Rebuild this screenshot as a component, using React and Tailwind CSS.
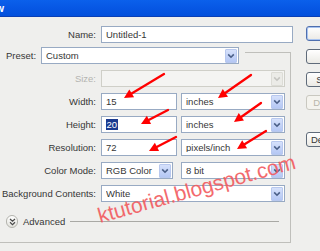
import React from "react";

function DropBtn({ disabled }) {
  return (
    <div
      className={
        disabled
          ? "mr-[1px] flex h-[14px] w-[12px] items-center justify-center rounded-[1px] border border-[#dcdcd6] bg-[#ebebe7]"
          : "mr-[1px] flex h-[14px] w-[12px] items-center justify-center rounded-[1px] border border-[#b8c8ee] bg-gradient-to-b from-[#d6e1fb] to-[#b4c7f4]"
      }
    >
      <svg width="8" height="6" viewBox="0 0 8 6">
        <path
          d="M1.2 1.4 L4 4.2 L6.8 1.4"
          fill="none"
          stroke={disabled ? "#c4c4c0" : "#4a5f87"}
          strokeWidth="1.6"
        />
      </svg>
    </div>
  );
}

function Combo({ cls, text, disabled }) {
  return (
    <div
      className={
        (disabled
          ? "border-[#cfcfc8] bg-[#f4f4f2] "
          : "border-[#98aac3] bg-white ") +
        "flex h-[17px] items-center border pl-[4px] " +
        cls
      }
    >
      <span className="flex-1 truncate leading-none">{text}</span>
      <DropBtn disabled={disabled} />
    </div>
  );
}

function Field({ cls, children }) {
  return (
    <div
      className={
        "flex h-[17px] items-center border border-[#98aac3] bg-white pl-[4px] " +
        cls
      }
    >
      {children}
    </div>
  );
}

function Row({ label, labelCls, children }) {
  return (
    <div className="flex h-[17px] items-center">
      <div
        className={
          "w-[96px] whitespace-nowrap pr-[0px] text-right leading-none " +
          (labelCls || "")
        }
      >
        {label}
      </div>
      <div className="ml-[5px] flex items-center">{children}</div>
    </div>
  );
}

function Arrow({ x1, y1, x2, y2 }) {
  const dx = x2 - x1;
  const dy = y2 - y1;
  const L = Math.hypot(dx, dy);
  const ux = dx / L;
  const uy = dy / L;
  const hl = 9;
  const hw = 4.6;
  const bx = x2 - ux * hl;
  const by = y2 - uy * hl;
  const px = -uy;
  const py = ux;
  return (
    <g>
      <line
        x1={x1}
        y1={y1}
        x2={bx + ux * 2}
        y2={by + uy * 2}
        stroke="#ff0000"
        strokeWidth="2.3"
        strokeLinecap="round"
      />
      <polygon
        points={`${x2},${y2} ${bx + px * hw},${by + py * hw} ${bx - px * hw},${by - py * hw}`}
        fill="#ff0000"
      />
    </g>
  );
}

function XpButton({ children, kind, cls }) {
  let c =
    "flex h-[15px] w-[80px] items-center justify-center whitespace-nowrap rounded-[3px] border leading-none ";
  if (kind === "default")
    c +=
      "border-[#4f6fae] bg-gradient-to-b from-white to-[#ebeae5] shadow-[inset_0_0_0_1px_#a9c4f0]";
  else if (kind === "disabled")
    c += "border-[#c9c8c0] bg-[#f4f3ee] text-[#b8b6aa]";
  else c += "border-[#5f6b7a] bg-gradient-to-b from-white to-[#ebeae5]";
  return <div className={c + " " + (cls || "")}>{children}</div>;
}

export default function App() {
  const arrows = [
    [164, 74, 124, 98],
    [168, 110, 141, 124],
    [176, 137, 149, 151],
    [251, 75, 218, 98],
    [261, 103, 234, 122],
    [266, 131, 237, 149],
  ];
  return (
    <div className="relative h-[251px] w-[320px] overflow-hidden bg-[#efefed] font-['Liberation_Sans',Arial,sans-serif] text-[9.5px] text-[#363636]">
      {/* title bar */}
      <div className="flex h-[17px] items-center border-b border-[#0a3fb5] bg-gradient-to-b from-[#0b60eb] via-[#0757e4] to-[#0350dc] text-[11px] font-bold text-white">
        <span className="ml-[-4.5px] leading-none">w</span>
      </div>

      <div className="flex pt-[9px]">
        {/* left column */}
        <div className="flex w-[293px] flex-col">
          <Row label="Name:">
            <Field cls="w-[192px]">
              <span className="leading-none">Untitled-1</span>
            </Field>
          </Row>

          <div className="mt-[4px] flex w-[291px] flex-col">
            {/* preset row with group box top line */}
            <div className="flex h-[17px]">
              <div className="flex w-[41px] items-center pl-[6px] leading-none">
                Preset:
              </div>
              <Combo cls="w-[198px]" text="Custom" />
              <div className="ml-[6px] mt-[5px] flex-1 border-r border-t border-[#bfbfbb]" />
            </div>

            {/* group body */}
            <div className="flex flex-col border-b border-r border-[#bfbfbb] pb-[14px] pt-[6px]">
              <div className="flex flex-col gap-[6px]">
                <Row label="Size:" labelCls="text-[#b4b4b0]">
                  <Combo cls="w-[184px]" text="" disabled />
                </Row>
                <Row label="Width:">
                  <Field cls="w-[76px]">
                    <span className="leading-none">15</span>
                  </Field>
                  <Combo cls="ml-[4px] w-[104px]" text="inches" />
                </Row>
                <Row label="Height:">
                  <Field cls="w-[76px]">
                    <span className="bg-[#1b3a8f] px-[0.5px] leading-[11px] text-white">
                      20
                    </span>
                  </Field>
                  <Combo cls="ml-[4px] w-[104px]" text="inches" />
                </Row>
                <Row label="Resolution:">
                  <Field cls="w-[76px]">
                    <span className="leading-none">72</span>
                  </Field>
                  <Combo cls="ml-[4px] w-[104px]" text="pixels/inch" />
                </Row>
                <Row label="Color Mode:">
                  <Combo cls="w-[72px]" text="RGB Color" />
                  <Combo cls="ml-[8px] w-[104px]" text="8 bit" />
                </Row>
                <Row label="Background Contents:">
                  <Combo cls="w-[184px]" text="White" />
                </Row>
              </div>

              {/* advanced */}
              <div className="mt-[13px] flex h-[13px] items-center">
                <div className="ml-[6px] flex h-[13px] w-[12px] items-center justify-center rounded-full border border-[#b3b3ad] bg-gradient-to-b from-white to-[#e2e2dc]">
                  <svg width="7" height="8" viewBox="0 0 7 8">
                    <path
                      d="M1 1 L3.5 3.3 L6 1 M1 4.3 L3.5 6.6 L6 4.3"
                      fill="none"
                      stroke="#4a4a4a"
                      strokeWidth="1.2"
                    />
                  </svg>
                </div>
                <span className="ml-[5px] leading-none">Advanced</span>
                <div className="ml-[5px] h-px w-[209px] bg-[#a9a9a5]" />
              </div>
            </div>
          </div>
        </div>

        {/* right buttons */}
        <div className="ml-[13px] flex flex-col">
          <XpButton kind="default">OK</XpButton>
          <XpButton cls="mt-[8px]">Cancel</XpButton>
          <XpButton cls="mt-[8px]">Save Preset...</XpButton>
          <XpButton cls="mt-[8px]" kind="disabled">
            Delete Preset...
          </XpButton>
          <XpButton cls="mt-[22px]">Device Central...</XpButton>
        </div>
      </div>

      {/* overlays: arrows + watermark */}
      <svg
        className="pointer-events-none absolute left-0 top-0"
        width="320"
        height="251"
        viewBox="0 0 320 251"
      >
        {arrows.map((a, i) => (
          <Arrow key={i} x1={a[0]} y1={a[1]} x2={a[2]} y2={a[3]} />
        ))}
      </svg>
      <span className="pointer-events-none absolute left-[100px] top-[205px] origin-[0_17.8px] -rotate-[15.5deg] whitespace-nowrap text-[21px] leading-[21px] text-[#f25a5e] opacity-90">
        ktutorial.blogspot.com
      </span>
    </div>
  );
}
